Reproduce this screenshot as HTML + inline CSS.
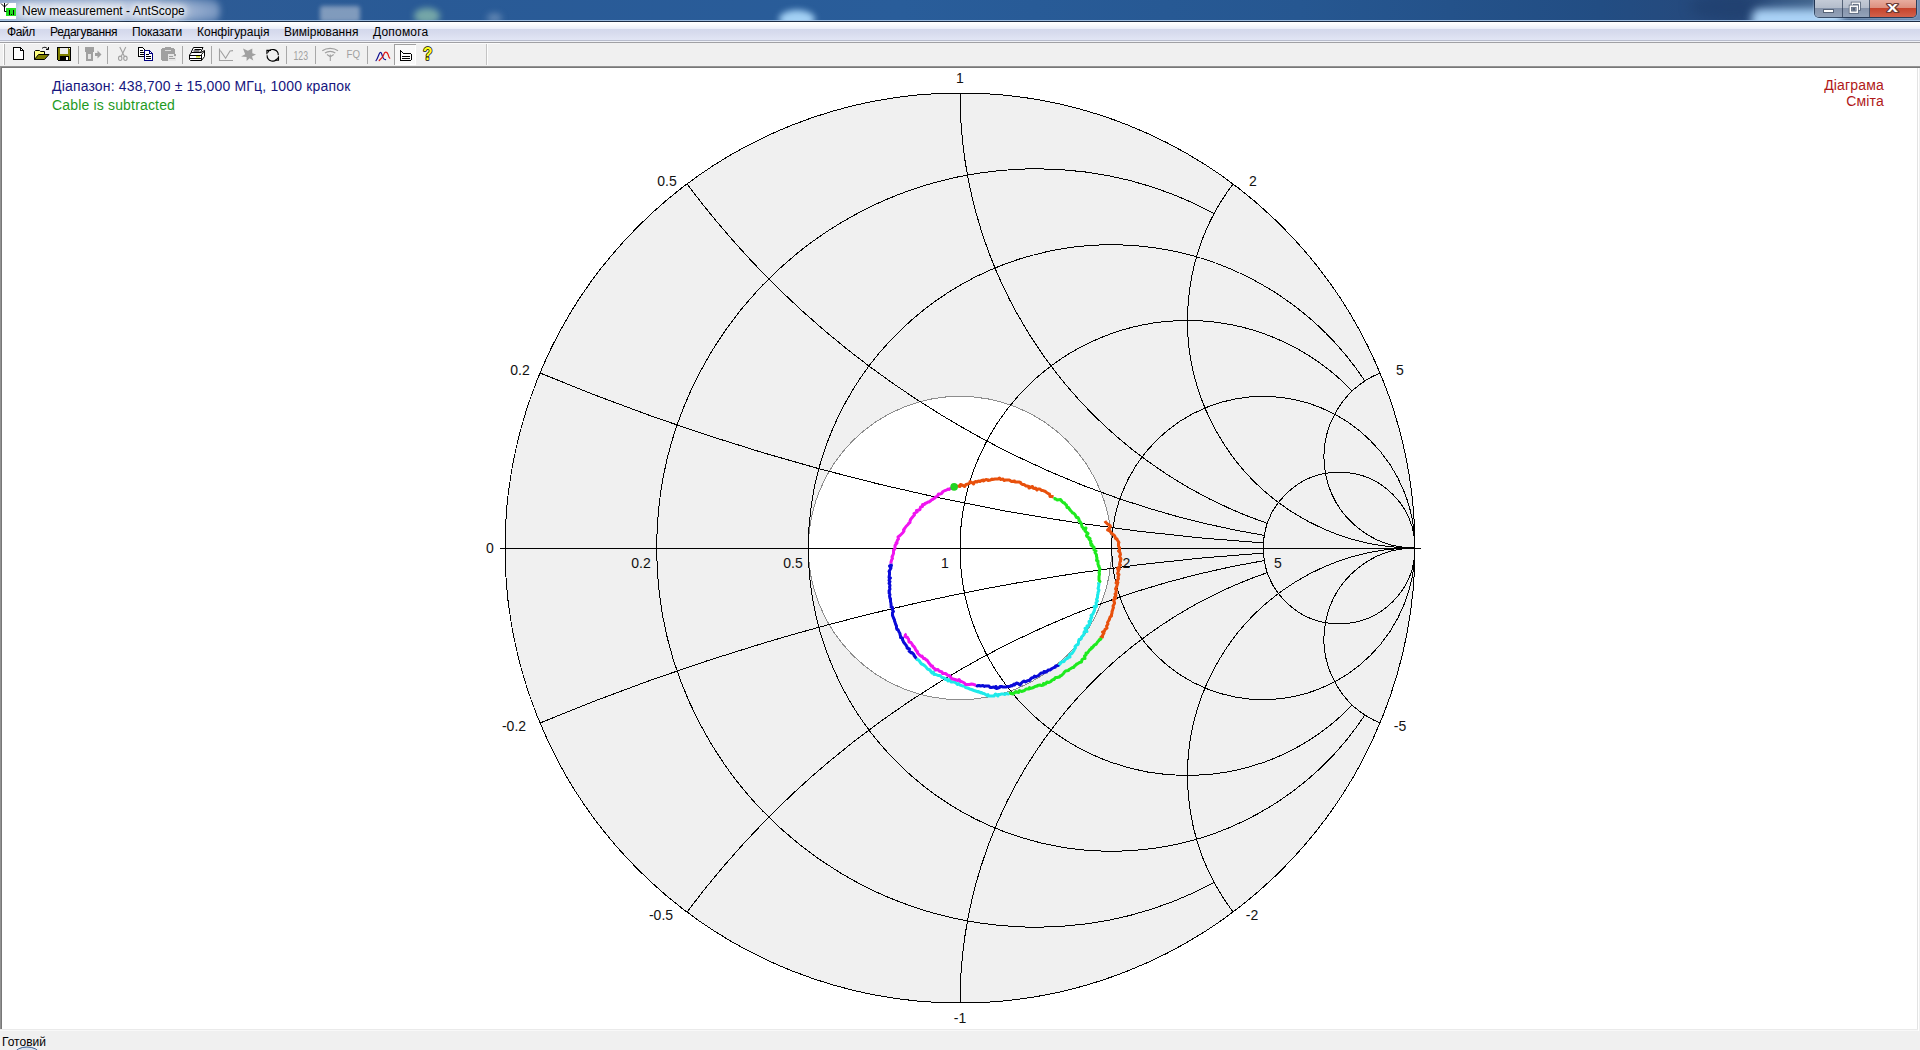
<!DOCTYPE html>
<html lang="uk">
<head>
<meta charset="utf-8">
<title>New measurement - AntScope</title>
<style>
html,body{margin:0;padding:0;}
body{width:1920px;height:1050px;overflow:hidden;position:relative;background:#fff;font-family:"Liberation Sans",Arial,sans-serif;font-size:12px;color:#000;}
.abs{position:absolute;}
#titlebar{left:0;top:0;width:1920px;height:21px;overflow:hidden;
 background:linear-gradient(90deg,#4f719f 0,#2d5b95 200px,#295a96 420px,#295d9a 900px,#265791 1300px,#224d83 1600px,#27487a 1740px,#3c5f89 1800px,#6f8db3 1920px);}
#titlebar .blob{position:absolute;border-radius:50%;filter:blur(5px);}
#titleline{left:0;top:20px;width:1920px;height:2px;background:linear-gradient(rgba(170,200,232,.85) 0,rgba(170,200,232,.85) 50%,#1c2c44 50%,#1c2c44 100%);}
#title{left:22px;top:4px;font-size:12px;line-height:15px;white-space:nowrap;color:#000;
 text-shadow:0 0 6px #fff,0 0 6px #fff,0 0 10px #fff,0 0 12px #fff,0 0 14px #fff;}
#menubar{left:0;top:22px;width:1920px;height:18px;background:linear-gradient(#ffffff 0,#fdfdfe 11%,#f3f5fb 25%,#e9edf9 38.500%,#d3d8ec 39%,#d8dcee 65%,#e2e6f5 100%);}
#menubar span{position:absolute;top:3px;line-height:15px;white-space:nowrap;}
#menuline{left:0;top:40px;width:1920px;height:3px;background:linear-gradient(#b9bdcd 0,#b9bdcd 33.300%,#eef0f6 33.300%,#eef0f6 66.600%,#a0a0a4 66.600%);}
#toolbar{left:0;top:43px;width:1920px;height:23px;background:#f0f0f0;}
#toolline{left:0;top:66px;width:1920px;height:2px;background:linear-gradient(#a0a0a0,#696969);}
#client{left:0;top:68px;width:1920px;height:963px;background:#fff;}
#statusbar{left:0;top:1031px;width:1920px;height:19px;background:#f0f0f0;}
#status{left:2px;top:1035px;line-height:15px;}
.hdr{font-size:14px;line-height:16px;white-space:nowrap;letter-spacing:0.17px;}
#chart{position:absolute;left:0;top:0;}
</style>
</head>
<body>
<div id="client" class="abs"></div>
<svg id="chart" width="1920" height="1050" viewBox="0 0 1920 1050">
<g shape-rendering="crispEdges">
<circle cx="960" cy="548" r="455" fill="#f0f0f0" stroke="none"/>
<circle cx="960" cy="548" r="151.67" fill="#ffffff" stroke="#8c8c8c" stroke-width="1"/>
<g fill="none" stroke="#000" stroke-width="1">
<circle cx="960" cy="548" r="455"/>
<path d="M500 548.5H1421"/>
<path d="M1214.26 213.44A379.17 379.17 0 1 0 1214.26 882.56"/>
<path d="M1364.91 381.03A303.33 303.33 0 1 0 1364.91 714.97"/>
<path d="M1352.24 391.1A227.5 227.5 0 1 0 1352.24 704.9"/>
<circle cx="1263.33" cy="548" r="151.67"/>
<circle cx="1339.17" cy="548" r="75.83"/>
<path d="M540 373A2275 2275 0 0 0 1263.5 542.95"/>
<path d="M540 723A2275 2275 0 0 1 1263.5 553.05"/>
<path d="M687 184A910 910 0 0 0 1264.38 535.45"/>
<path d="M687 912A910 910 0 0 1 1264.38 560.55"/>
<path d="M960 93A455 455 0 0 0 1267.43 523.41"/>
<path d="M960 1003A455 455 0 0 1 1267.43 572.59"/>
<path d="M1233 184A227.5 227.5 0 0 0 1415 548"/>
<path d="M1233 912A227.5 227.5 0 0 1 1415 548"/>
<path d="M1380 373A91 91 0 0 0 1415 548"/>
<path d="M1380 723A91 91 0 0 1 1415 548"/>
</g>
</g>
<g fill="none" stroke-width="3" stroke-linejoin="round" stroke-linecap="butt">
<polyline stroke="#e8500c" points="1105,521 1105.5,522 1106.5,523 1107.5,524 1110,525.5 1110.5,526.5 1109.5,528 1107.5,530 1109.5,531 1109.5,530.5 1111,532.5 1113,534.5 1114,535 1115,536.5 1115.5,538.5 1117,539 1117,539.5 1118,541 1119,542.5 1118.5,543 1118.5,546 1119,547 1119.5,547.5 1119.5,550.5 1118.5,551 1120,552.5 1120.5,554.5 1119.5,556.5 1120.5,558 1121,559 1120.5,559.5 1120.5,561.5 1120,562 1119.5,564.5 1120.5,565 1118.5,567.5 1119.5,569 1117.5,568.5 1118.5,571 1117.5,573.5 1119,574.5 1118,577 1118.5,578.5 1118,579.5 1116.5,581.5 1118,582.5 1116,583 1117.5,584 1116.5,587 1115.5,589 1116.5,589.5 1116,591.5 1116,593.5 1115,594 1116,595.5 1114.5,597.5 1115.5,598.5 1113.5,600 1114,601.5 1114.5,602.5 1114.5,603.5 1113,606 1113.5,607.5 1113,608.5 1112.5,610.5 1112,611.5 1112,613 1111.5,614.5 1111.5,616 1110,617 1109.5,619 1109,620 1109.5,619.5 1107.5,622.5 1108,624 1107,625.5 1106.5,626 1107,628 1105,629.5 1104.5,631 1102.5,632 1104,633 1102.5,635.5 1102.5,637 1101,637 1101.5,638"/>
<polyline stroke="#1eea1e" points="1101.5,638 1100.5,639.5 1100,639 1098.5,641 1097.5,642 1096,644.5 1095,644.5 1094,645.5 1092.5,647.5 1091.5,647.5 1091.5,648.5 1089.5,650 1088.5,651.5 1087.5,653 1086,653 1086,655 1084.5,656 1085,658.5 1084,658.5 1082,659.5 1081.5,662 1079.5,662.5 1079.5,662.5 1076.5,664.5 1076.5,664 1075.5,665.5 1075,665.5 1073.5,667.5 1072.5,667.5 1070,669 1069,669.5 1068.5,670.5 1065.5,671 1064,672.5 1064,673 1062.5,674.5 1061.5,675.5 1060,676 1059.5,677 1057,677.5 1055.5,677.5 1054,679.5 1053,679.5 1052.5,680 1051,681 1051,681.5 1049,682.5 1047,682 1045.5,684 1043.5,683.5 1043.5,685 1041.5,685.5 1040,685 1037.5,685.5 1037.5,686 1035,686.5 1033.5,687.5 1032,688 1030,688.5 1029.5,687.5 1029,689 1026,689 1025.5,689.5 1024.5,690.5 1023,691 1021.5,691.5 1019.5,690.5 1018.5,692.5 1016,692 1016,691.5 1013,694 1011,693.5 1011,693 1009,693.5"/>
<polyline stroke="#1eeaea" points="1009,693.5 1008.5,694 1006,693.5 1005,694.5 1003.5,694 1001,694 1000.5,694.5 998,694.5 998,696 995.5,694 994,696 993,696 990.5,696 988,696 988,694.5 987,695.5 984,693.5 983,693.5 981.5,692.5 981.5,693 978,691.5 978,692 977,691.5 974,690.5 971.5,689.5 971.5,689.5 969.5,689 969,688.5 967.5,688 965.5,687.5 964.5,686 962.5,686 961.5,685.5 960,685 958.5,683.5 957.5,684.5 956,683 954.5,682 952,682 951,682 949.5,679.5 948,681 947,679 945.5,679.5 945,678.5 944,678 942,677.5 941.5,677 940,675.5 938,675.5 937,675 936,674.5 934,674.5 933.5,672 932,673 930.5,671 930,670 927.5,669 927,668.5 926,667 925,666 923,664.5 921.5,664 920,662 919.5,661 918.5,660 917,659.5 916.5,658.5"/>
<polyline stroke="#0a0ad8" points="916.5,658.5 916,658 914,655.5 914.5,656 913.5,654 912,652.5 911.5,653 909,651 909.5,649 907,648 907,646.5 906.5,646 906,645 905.5,644.5 903.5,642 903,640.5 902.5,640 902.5,638 900.5,637.5 900.5,636 900,634.5 900,633.5 899,632 898,629.5 897,629.5 896.5,628 896.5,626 896,625 895.5,624 895,622 894.5,621 894.5,620 893.5,618 893,616.5 892.5,615.5 892.5,614 892.5,612.5 893.5,611.5 892.5,610 892.5,607.5 891,607 891.5,607 891,605 891,603.5 890.5,601.5 890.5,600 890.5,598.5 890,598.5 889.5,596 890,594.5 889,593 889.5,592 889,591 890,589 889.5,587 890,585.5 889.5,584 889,583.5 890,581.5 889,580.5 889.5,579 890.5,578 889,577.5 889.5,574.5 889.5,572 889,571.5 891,568 889.5,566 891.5,565.5 891,564.5 891,563.5"/>
<polyline stroke="#f014f0" points="891,563.5 891,562 891.5,560.5 891.5,560 892.5,558.5 892,557 892.5,556 893.5,553.5 893.5,551.5 893.5,550 894.5,549.5 895,548 895,545.5 897,543 896,543 897,541.5 897.5,540 898.5,539 898,537 900,535.5 900.5,535 901.5,534 903,532.5 904,531 903.5,530 905,528 906,526.5 906.5,526 908.5,524 908.5,523.5 910,522.5 910,521 910.5,520 910.5,519.5 913,516.5 913.5,516 914.5,515 914,513.5 917,512 916.5,510.5 917.5,510.5 920,509.5 920,509.5 920.5,507 922.5,506.5 922.5,504.5 924.5,504.5 925,503.5 926.5,503 928,502 929,502 931,500.5 932,499.5 932.5,499.5 934.5,498 935,498 935.5,497 937.5,496 938.5,494 940.5,494 941.5,493.5 943,491.5 945,490.5 945.5,490.5 947.5,489.5 948,489 949,489.5 950.5,488.5 951.5,487.5"/>
<polyline stroke="#e8500c" points="957,486.5 958.5,486 960,486.5 960.5,484.5 963,485.5 964.5,486.5 966,484.5 968,484 970,483 970,481.5 972,482.5 973.5,484 974.5,482 975.5,481.5 977,482 978.5,481 980,481.5 981.5,480.5 983.5,480 983.5,481 986,479.5 988,480 988,480.5 990.5,480 992,479 992.5,479.5 995,479 996.5,479 998,479 999.5,478 1000.5,479.5 1003,479 1004,480.5 1005.5,480 1008,480 1009.5,480 1010,480.5 1011.5,481.5 1014.5,481 1014,481.5 1015.5,482 1017.5,482 1019,482 1020.5,482.5 1021,483.5 1022.5,484.5 1024,484.5 1026,486 1027,486 1029,486.5 1029,488 1032.5,486.5 1033,488 1034.5,488.5 1035.5,488 1037,490 1038,489 1040,489 1041.5,490.5 1043,490.5 1044,491 1045.5,491.5 1046.5,492.5 1049,494 1049.5,494 1050,496.5 1052,496.5 1053.5,497"/>
<polyline stroke="#1eea1e" points="1053.5,499 1055,498.5 1056.5,499.5 1057,500 1060.5,499.5 1062,501.5 1063,502.5 1064.5,503 1065,504 1066.5,505 1067,507.5 1068.5,507.5 1069,508.5 1070.5,510.5 1071.5,511.5 1072.5,513 1073.5,513 1075,514.5 1075.5,515.5 1076.5,517.5 1078,517.5 1079,519.5 1079,521 1080,521.5 1081.5,524 1081.5,524.5 1082,527 1083,527.5 1083.5,529 1086,528 1085,531 1086,532 1088,533.5 1086.5,535.5 1087,536.5 1088.5,537.5 1090,538.5 1089,539 1091,541.5 1090.5,543 1092,544.5 1091,545 1093.5,547 1094,547 1094,550 1096,551 1095,552.5 1096,554 1096.5,555 1096.5,556.5 1097,558 1096.5,560.5 1098,561 1098,563.5 1098,564.5 1099,566 1098.5,566 1100,569 1099.5,570 1099.5,571.5 1099,572.5 1099.5,574 1099,576.5 1099,578.5 1099,580 1100,581.5 1099,582.5"/>
<polyline stroke="#1eeaea" points="1099,582.5 1098.5,583.5 1099,584 1098.5,587 1098,588.5 1099,590 1098.5,591.5 1098,592.5 1098,594 1097.5,595 1097.5,597.5 1096.5,599.5 1097,601 1097.5,601 1096,602.5 1096.5,606.5 1094,606.5 1095.5,607.5 1095,607.5 1094.5,610.5 1094,611.5 1093.5,612.5 1093,614 1091,615.5 1092,617.5 1090.5,618.5 1091,620 1090.5,622 1089,621.5 1089.5,624.5 1088.5,625.5 1087,626 1087.5,627.5 1085,628.5 1087,631.5 1084.5,631.5 1084,632.5 1084,634.5 1082,636.5 1081.5,637 1081.5,638 1081,639 1079,639.5 1078.5,641.5 1078.5,643 1078,644.5 1076.5,645 1075,646.5 1075.5,648 1074.5,649 1074,650.5 1073,652 1072,653.5 1070.5,654 1069.5,654.5 1070,657 1068,657.5 1067.5,658.5 1066.5,658.5 1064.5,660.5 1064,661.5 1061.5,662 1060.5,662.5 1060.5,663.5 1058.5,665.5 1058,665"/>
<polyline stroke="#0a0ad8" points="1058,665 1058,665.5 1055.5,666 1055.5,667 1054,667.5 1052,668.5 1050,670 1048,670 1048,670.5 1046.5,671.5 1046.5,672 1044,671.5 1043.5,673 1041,673 1040,674 1038.5,675.5 1037.5,676 1035.5,677 1034.5,676 1033.5,677.5 1031.5,678 1031,678.5 1029.5,680.5 1028.5,680.5 1027,681 1025.5,682 1024,681 1022.5,682 1021.5,683 1020,685 1018,683.5 1016.5,683 1014.5,685 1014,684 1012,686 1011,685.5 1010,686.5 1009.5,686.5 1007.5,686.5 1006.5,687 1004,687 1003,687 1001.5,686.5 1000,686.5 999.5,687.5 996.5,688.5 996,686.5 995.5,688 994,687 991.5,687.5 990,687.5 989,686 986,686 985,686 984.5,686.5 983,685.5 980.5,686 979,685.5 977,686 976,685"/>
<polyline stroke="#f014f0" points="976,685 974.5,685 974,684.5 971.5,684 969.5,684.5 967,684.5 965.5,684.5 964.5,683 963.5,682.5 961.5,681.5 960.5,681.5 959,679.5 958,680.5 955,679.5 955,679.5 953,679 952,679 951,677.5 949.5,675.5 949,676 948,675.5 945.5,673.5 944,673.5 942.5,673.5 942,672 940.5,671.5 939,671 938,669.5 935.5,670 935,669 933,667.5 932.5,666 931,666 931,665.5 928.5,662.5 928.5,662.5 927,660 926,660 925,658.5 923.5,658.5 922,656 921.5,656.5 920,655.5 918.5,654 917.5,653 917.5,651.5 917,651.5 915.5,649.5 915,648 913.5,646 913,646 912,644 911,642.5 909,642 908.5,639 907.5,638 907.5,637.5 905,636.5 905.5,634.5 904.5,634"/>
</g>
<circle cx="954.1" cy="486.9" r="3.8" fill="#22d422"/>
<g font-family="'Liberation Sans', Arial, sans-serif" font-size="14" fill="#111" text-anchor="middle"><text x="960" y="83">1</text><text x="667" y="186">0.5</text><text x="1253" y="186">2</text><text x="520" y="375">0.2</text><text x="1400" y="375">5</text><text x="490" y="553">0</text><text x="514" y="731">-0.2</text><text x="1400" y="731">-5</text><text x="661" y="920">-0.5</text><text x="1252" y="920">-2</text><text x="960" y="1023">-1</text><text x="641" y="568">0.2</text><text x="793" y="568">0.5</text><text x="945" y="568">1</text><text x="1126.5" y="568">2</text><text x="1278" y="568">5</text></g>
</svg>
<div class="abs hdr" style="left:52px;top:78px;color:#16167e;">Діапазон: 438,700 ± 15,000 МГц, 1000 крапок</div>
<div class="abs hdr" style="left:52px;top:97px;color:#1e9a1e;">Cable is subtracted</div>
<div class="abs hdr" style="right:36px;top:77px;color:#b01818;text-align:right;">Діаграма<br>Сміта</div>

<div id="titlebar" class="abs">
<div class="blob" style="left:-30px;top:-4px;width:250px;height:30px;background:radial-gradient(ellipse at 45% 50%,rgba(215,224,240,.95) 0,rgba(198,210,232,.9) 45%,rgba(165,186,218,.55) 75%,rgba(120,150,195,0) 100%);filter:blur(3px);border-radius:14px;"></div>
<div class="blob" style="left:320px;top:6px;width:40px;height:16px;background:rgba(165,182,205,.7);filter:blur(2px);border-radius:3px;"></div>
<div class="blob" style="left:414px;top:8px;width:26px;height:16px;background:rgba(150,200,175,.7);filter:blur(3px);"></div>
<div class="blob" style="left:487px;top:13px;width:15px;height:10px;background:rgba(150,175,205,.5);filter:blur(3px);"></div>
<div class="blob" style="left:779px;top:10px;width:36px;height:18px;background:rgba(170,215,250,.95);filter:blur(3px);"></div>
<div class="blob" style="left:1690px;top:-6px;width:80px;height:26px;background:rgba(30,60,105,.55);filter:blur(6px);"></div>
<div class="blob" style="left:1752px;top:9px;width:90px;height:24px;background:rgba(172,212,248,.98);filter:blur(4px);border-radius:8px;"></div>
</div>
<div id="titleline" class="abs"></div>
<svg class="abs" style="left:0;top:3px" width="17" height="17" viewBox="0 0 17 17" shape-rendering="crispEdges">
<rect x="0" y="0" width="16" height="16" fill="#fff"/>
<rect x="6" y="5" width="10" height="8" fill="#1ee01e"/>
<path d="M4.5 0V8.5H6.5M1 0.5L4.5 4M8 0.5L4.5 4" fill="none" stroke="#000" stroke-width="1" shape-rendering="auto"/>
<path d="M9.5 7V12M13.5 7V12M11 11.5H12" fill="none" stroke="#000" stroke-width="1"/>
</svg>
<div id="title" class="abs">New measurement - AntScope</div>
<div class="abs" style="left:1814px;top:-1px;width:103px;height:19px;border:1px solid rgba(20,35,60,.75);border-top:none;border-radius:0 0 5px 5px;box-sizing:border-box;overflow:hidden;box-shadow:0 0 2px rgba(255,255,255,.6);">
<div class="abs" style="left:0;top:0;width:27px;height:18px;background:linear-gradient(#c6cdd8 0,#b4bdcb 48%,#8593aa 52%,#94a3b9 100%);border-right:1px solid rgba(40,55,80,.7);"></div>
<div class="abs" style="left:28px;top:0;width:26px;height:18px;background:linear-gradient(#c6cdd8 0,#b4bdcb 48%,#8593aa 52%,#94a3b9 100%);border-right:1px solid rgba(40,55,80,.7);"></div>
<div class="abs" style="left:55px;top:0;width:47px;height:18px;background:linear-gradient(#e9b0a3 0,#dd907f 48%,#c6432c 52%,#d2614b 100%);"></div>
</div>
<svg class="abs" style="left:1814px;top:0" width="104" height="18" viewBox="0 0 104 18">
<rect x="9.5" y="9.5" width="10" height="3" fill="#fff" stroke="#566377" stroke-width="1"/>
<rect x="38.300" y="3.200" width="7" height="6" fill="none" stroke="#566377" stroke-width="3"/>
<rect x="38.300" y="3.200" width="7" height="6" fill="none" stroke="#fff" stroke-width="1.400"/>
<rect x="36.300" y="6.200" width="7" height="6" fill="#a9b3c3" stroke="#566377" stroke-width="3"/>
<rect x="36.300" y="6.200" width="7" height="6" fill="none" stroke="#fff" stroke-width="1.500"/>
<rect x="38.400" y="8" width="2.800" height="2.600" fill="#566377"/>
<text x="78.500" y="12" text-anchor="middle" font-family="'Liberation Sans',Arial,sans-serif" font-weight="bold" font-size="15" fill="#fff" stroke="#6b3a34" stroke-width="2.200" paint-order="stroke" stroke-linejoin="round" textLength="11" lengthAdjust="spacingAndGlyphs">x</text>
</svg>
<div id="menubar" class="abs">
<span style="left:7px;letter-spacing:-0.4px">Файл</span><span style="left:50px;letter-spacing:-0.3px">Редагування</span><span style="left:132px;letter-spacing:-0.17px">Показати</span><span style="left:197px">Конфігурація</span><span style="left:284px;letter-spacing:0.05px">Вимірювання</span><span style="left:373px;letter-spacing:0.2px">Допомога</span>
</div>
<div id="menuline" class="abs"></div>
<div id="toolbar" class="abs">
<svg class="abs" style="left:0;top:-1px" width="500" height="26" viewBox="0 42 500 26">
<g shape-rendering="crispEdges">
<rect x="0" y="43" width="500" height="1" fill="#fbfbfb"/>
<rect x="3" y="44" width="1" height="21" fill="#fdfdfd"/><rect x="4" y="44" width="1" height="21" fill="#b4b4b4"/>
<rect x="486" y="44" width="1" height="21" fill="#c4c4c4"/><rect x="487" y="44" width="1" height="21" fill="#fdfdfd"/>
<g fill="#a8a8a8"><rect x="78" y="46" width="1" height="18"/><rect x="107" y="46" width="1" height="18"/><rect x="182" y="46" width="1" height="18"/><rect x="211" y="46" width="1" height="18"/><rect x="286" y="46" width="1" height="18"/><rect x="315" y="46" width="1" height="18"/><rect x="367" y="46" width="1" height="18"/></g>
<!-- pressed button -->
<rect x="394" y="44" width="22" height="21" fill="#f9f9f9"/>
<rect x="394" y="44" width="22" height="1" fill="#a0a0a0"/><rect x="394" y="44" width="1" height="21" fill="#a0a0a0"/>
<rect x="395" y="64" width="21" height="1" fill="#fff"/><rect x="415" y="45" width="1" height="20" fill="#fff"/>
<!-- new -->
<path d="M13.500 47.500H20.500L23.500 50.500V59.500H13.500Z" fill="#fff" stroke="#000"/>
<path d="M20.500 47.500V50.500H23.500" fill="none" stroke="#000"/>
<!-- save -->
<path d="M57.500 47.500H70.500V60.500H58.500L57.500 59.500Z" fill="#808000" stroke="#000"/>
<rect x="60" y="48" width="8" height="6" fill="#ececec"/>
<rect x="60" y="56" width="9" height="4" fill="#000"/><rect x="66" y="57" width="2" height="3" fill="#fff"/>
<rect x="69" y="48" width="1" height="1" fill="#fff"/>
<!-- export (disabled) -->
<rect x="85" y="47" width="9" height="5" fill="#a0a0a0"/><rect x="86" y="52" width="7" height="9" fill="#a0a0a0"/><rect x="88" y="54" width="3" height="5" fill="#e4e4e4"/>
<rect x="95" y="53" width="3" height="3" fill="#a0a0a0"/>
</g>
<path d="M97.500 50.500L101.500 54.500L97.500 58.500Z" fill="#a0a0a0"/>
<!-- open -->
<path d="M34.500 59.500V51.500L35.500 50.500H39.500L40.500 51.500H44.500V54.500" fill="#ffff80" stroke="#000" stroke-linejoin="round"/>
<path d="M34.500 59.500L38.500 54.500H49L44.500 59.500Z" fill="#808000" stroke="#000" stroke-linejoin="round"/>
<path d="M42 48.500C43.500 46.800 46.500 46.800 48 49.500" fill="none" stroke="#000"/><path d="M46 49.500H48.500V47" fill="none" stroke="#000"/>
<!-- cut (disabled) -->
<g fill="none" stroke="#a0a0a0" stroke-width="1.100"><path d="M119.800 47L124.300 56.300M125.800 47L121.300 56.300"/><ellipse cx="120.200" cy="58.300" rx="1.700" ry="2.200"/><ellipse cx="125.400" cy="58.300" rx="1.700" ry="2.200"/></g>
<!-- copy -->
<g shape-rendering="crispEdges">
<path d="M138.500 47.500H142.500L145.500 50.500V56.500H138.500Z" fill="#fff" stroke="#000"/>
<path d="M140 50.500H143M140 52.500H144M140 54.500H144" stroke="#000" fill="none"/>
<path d="M144.500 50.500H149.500L152.500 53.500V60.500H144.500Z" fill="#fff" stroke="#000080"/>
<path d="M149.500 50.500V53.500H152.500" fill="none" stroke="#000080"/>
<path d="M146 54.500H149M146 56.500H151M146 58.500H151" stroke="#000" fill="none"/>
<!-- paste (disabled) -->
<rect x="161" y="49" width="14" height="11" fill="#a0a0a0"/><rect x="162" y="48" width="12" height="13" fill="#a0a0a0"/><rect x="165" y="47" width="6" height="2" fill="#a0a0a0"/>
<rect x="165" y="50" width="6" height="1" fill="#dcdcdc"/>
<rect x="168" y="54" width="8" height="7" fill="#e6e6e6"/><rect x="174" y="54" width="2" height="2" fill="#a0a0a0"/>
<rect x="169" y="56" width="4" height="1" fill="#a0a0a0"/><rect x="169" y="58" width="6" height="1" fill="#a0a0a0"/>
</g>
<!-- print -->
<g stroke="#000" stroke-linejoin="round">
<path d="M193.500 47.500H203L200.500 52.500H191Z" fill="#fff"/>
<path d="M189.500 55L191.500 52.500H201L204.500 50.500V56.500L201.500 60.500H190.500L189.500 59.500Z" fill="#fff"/>
<path d="M194.500 49.500H201M193.500 51H199.500M190 58.500H201.500M201.500 60.500V54.500M201.500 54.500L204.500 51M189.500 55.500H201.500" fill="none"/>
</g>
<rect x="196" y="56" width="4" height="1.500" fill="#c8d820"/>
<!-- chart (disabled) -->
<g fill="none" stroke="#a0a0a0" stroke-width="1.100"><path d="M219.500 48.500V60.500H233"/><path d="M220.300 50.500L225.600 58.300L230 51L233 50.600"/></g>
<!-- star (disabled) -->
<path d="M243 48.400L247.900 50.800L252.300 48.400L252.300 53.200L256 54.500L252 56.600L253.300 60.600L249.600 58.200L246.600 61L246.600 56.900L241.100 56.600L245.200 54.200Z" fill="#a0a0a0"/>
<!-- refresh -->
<g fill="none" stroke="#000" stroke-width="1.100"><path d="M267.600 52.800A5.600 5.600 0 0 1 278.300 55.300M277.800 57.800A5.600 5.600 0 0 1 267.100 55.300"/><path d="M271 50.400H266.900V54.200M274.900 60.100H278.500V56.200"/></g>
<!-- 123 / FQ (disabled) -->
<g font-family="'Liberation Sans',Arial,sans-serif" fill="#a0a0a0"><text x="293.500" y="60" font-size="13" textLength="14.500" lengthAdjust="spacingAndGlyphs">123</text><text x="346.500" y="57.900" font-size="10.500" textLength="13.500" lengthAdjust="spacingAndGlyphs">FQ</text></g>
<!-- antenna (disabled) -->
<g fill="none" stroke="#a0a0a0" stroke-width="1.100"><path d="M322.300 50.800C326.500 47.500 333.800 47.500 338 50.800"/><path d="M325 53C328 50.800 332.500 50.800 335.300 53"/><path d="M327 54.500L330.300 56.800L333.700 54.500M330.300 54.500V61"/></g>
<!-- curves -->
<g fill="none" stroke-width="1.200" stroke-linecap="round"><path d="M376 60.600C378 58.500 379 52.300 380.500 52.300S382 56 383 57.800S384.500 59.800 385.600 59.600" stroke="#101090"/><path d="M379.200 60.500L382.700 56.800C383.500 55.500 384 52.200 385.600 52.200S387.400 52.600 388 54.200S388.800 57.500 389.800 58.200" stroke="#e01818"/></g>
<!-- list icon (in pressed button) -->
<g shape-rendering="crispEdges"><path d="M400.500 50.500L403.500 53.500H410.500L411.500 54.500V59.500L410.500 60.500H400.500Z" fill="#fcfcfc" stroke="#000" stroke-width="1.400"/><path d="M402 56.500H410M402 58.500H410" stroke="#000" fill="none"/></g>
<!-- help -->
<text x="423" y="60.200" font-family="'Liberation Sans',Arial,sans-serif" font-weight="bold" font-size="17.500" fill="#ffff20" stroke="#000" stroke-width="1.600" textLength="9.500" lengthAdjust="spacingAndGlyphs" paint-order="stroke" stroke-linejoin="round">?</text>
</svg>
</div>
<div id="toolline" class="abs"></div>
<div class="abs" style="left:0;top:67px;width:2px;height:964px;background:linear-gradient(90deg,#a0a0a0,#696969);"></div>
<div class="abs" style="left:1917px;top:68px;width:3px;height:963px;background:linear-gradient(90deg,#e3e3e3 0,#e3e3e3 34%,#fff 34%,#fff 67%,#f0f0f0 67%);"></div>
<div class="abs" style="left:0;top:1029px;width:1918px;height:2px;background:linear-gradient(#e3e3e3,#ffffff);"></div>

<div id="statusbar" class="abs"></div>
<div id="status" class="abs">Готовий</div>
<svg class="abs" style="left:14px;top:1046px" width="26" height="4" viewBox="0 0 26 4"><ellipse cx="13" cy="8" rx="12.500" ry="7" fill="#cfdcec" fill-opacity=".7" stroke="#3a5f94" stroke-width="1"/></svg>
</body>
</html>
